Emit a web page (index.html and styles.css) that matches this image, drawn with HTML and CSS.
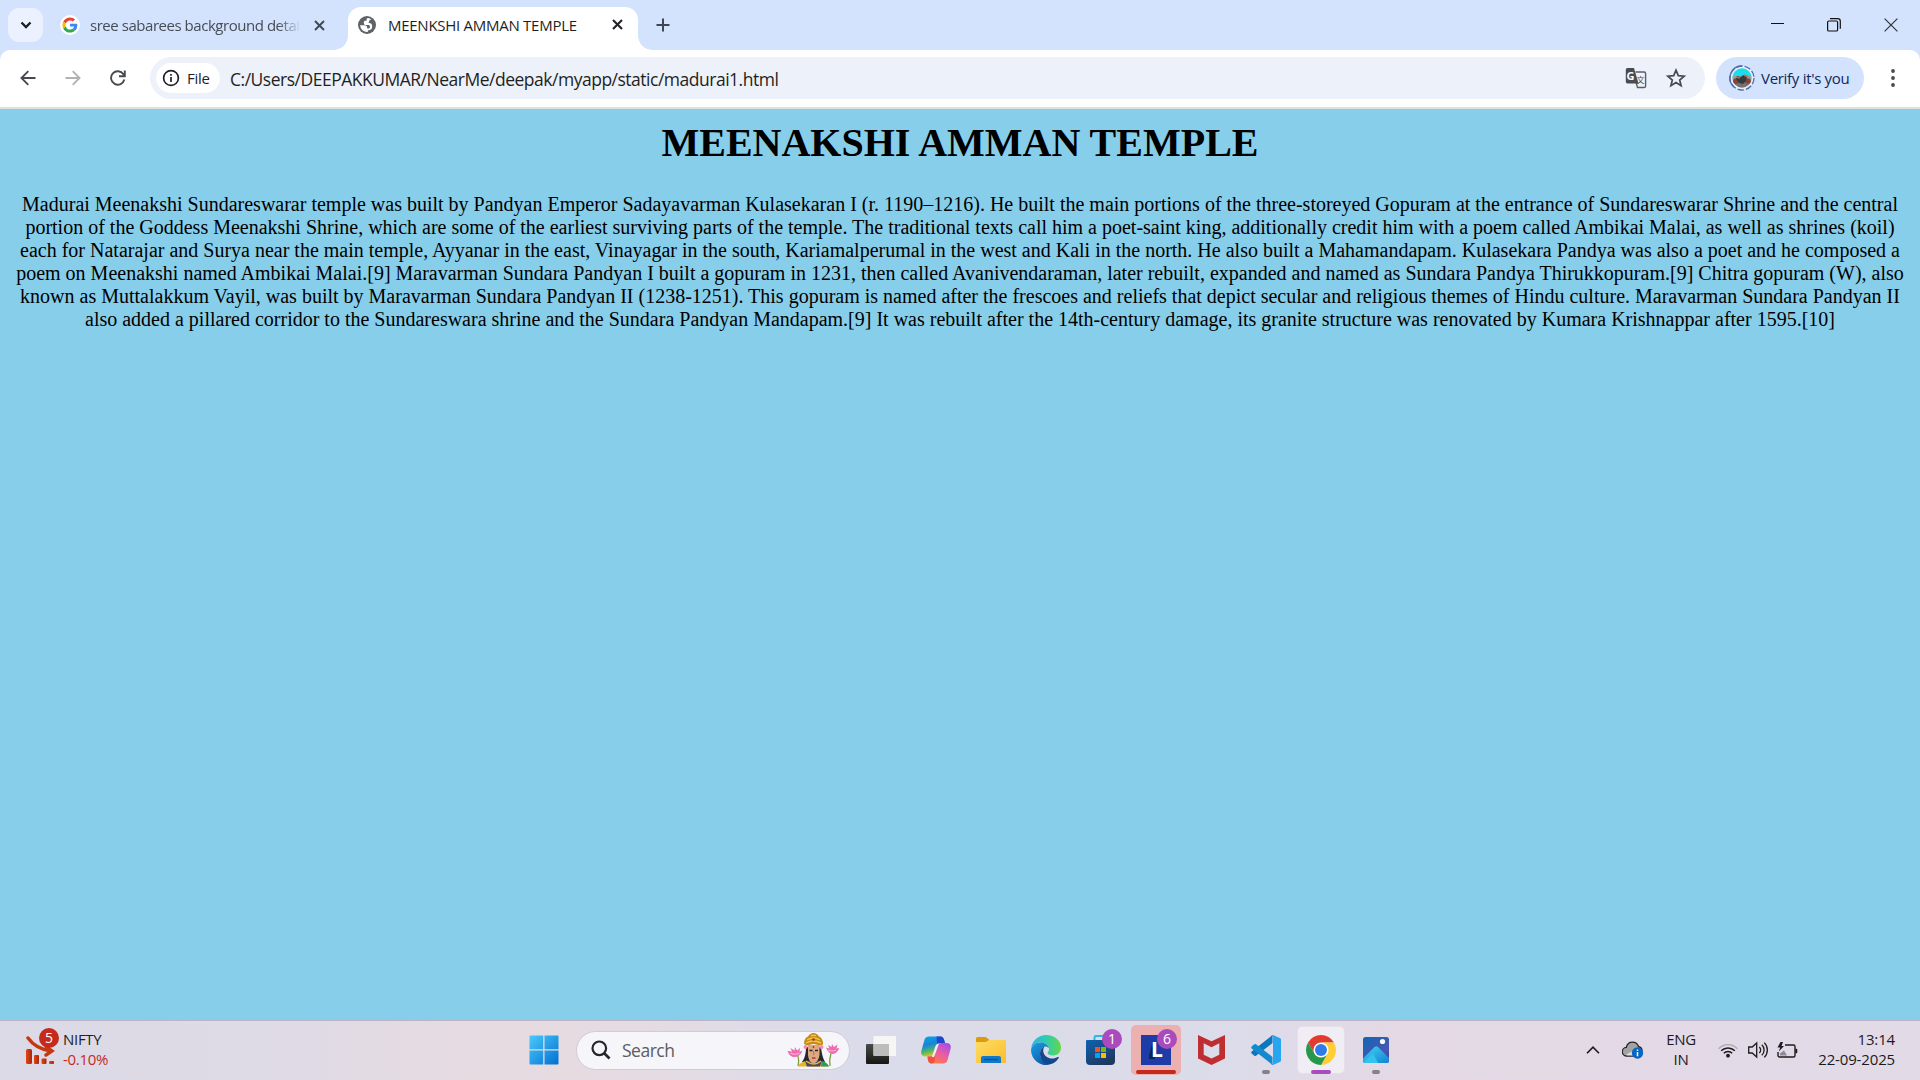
FILE: index.html
```html
<!DOCTYPE html>
<html lang="en">
<head>
<meta charset="utf-8">
<title>MEENKSHI AMMAN TEMPLE</title>
<link rel="stylesheet" href="styles.css">
</head>
<body>
<header class="tabstrip">
  <div class="tab-search"><svg width="12" height="8" viewBox="0 0 12 8"><path d="M1.5 1.5 6 6l4.500-4.500" fill="none" stroke="#1b1c1e" stroke-width="2.300"/></svg></div>
  <div class="tab tab-idle">
    <svg class="favicon" width="20" height="20" viewBox="0 0 20 20"><circle cx="10" cy="10" r="10" fill="#fff"/><g transform="translate(2.400 2.400) scale(.317)"><path fill="#EA4335" d="M24 9.500c3.540 0 6.710 1.220 9.210 3.600l6.850-6.850C35.900 2.380 30.470 0 24 0 14.620 0 6.510 5.380 2.560 13.220l7.980 6.190C12.430 13.720 17.740 9.500 24 9.500z"/><path fill="#4285F4" d="M46.980 24.550c0-1.570-.150-3.090-.380-4.550H24v9.020h12.940c-.580 2.960-2.260 5.480-4.780 7.180l7.730 6c4.510-4.180 7.090-10.360 7.090-17.650z"/><path fill="#FBBC05" d="M10.530 28.590c-.480-1.450-.760-2.990-.760-4.590s.270-3.140.760-4.590l-7.980-6.190C.920 16.460 0 20.120 0 24s.920 7.540 2.560 10.780l7.970-6.190z"/><path fill="#34A853" d="M24 48c6.480 0 11.930-2.130 15.890-5.810l-7.730-6c-2.150 1.450-4.920 2.300-8.160 2.300-6.260 0-11.570-4.220-13.470-9.910l-7.980 6.190C6.510 42.620 14.620 48 24 48z"/></g></svg>
    <span class="tab-title faded">sree sabarees background detai</span>
    <svg class="close" width="11" height="11" viewBox="0 0 11 11"><path d="M1 1l9 9M10 1l-9 9" stroke="#41474f" stroke-width="1.900"/></svg>
  </div>
  <div class="tab tab-active">
    <svg class="favicon" width="20" height="20" viewBox="0 0 24 24"><circle cx="12" cy="12" r="10.800" fill="#5f6368"/><path d="M3.700 12.300h5.500c2 0 3 1.200 3 3v1h1.600c1 0 1.800-.8 1.800-1.800V14c0-1.200-.8-2-2-2h-3.400c-1.200 0-2-.8-2-2V8.800c0-1 .8-1.800 1.800-1.800h1.500V5.500c0-1 .7-1.700 1.700-1.900 1.500.2 3 .8 4 1.700-1.700.3-2.200.8-2.700 1.700v1.200c0 .8-.5 1.300-1.300 1.300h1.300c2.200 0 3.700 1.500 3.700 3.700v1c0 2.400-1.600 4-4 4H13v2.200A8.400 8.400 0 0 1 3.700 12.300z" fill="#fff"/></svg>
    <span class="tab-title">MEENKSHI AMMAN TEMPLE</span>
    <svg class="close" width="11" height="11" viewBox="0 0 11 11"><path d="M1 1l9 9M10 1l-9 9" stroke="#202226" stroke-width="2.100"/></svg>
  </div>
  <svg class="new-tab" width="14" height="14" viewBox="0 0 14 14"><path d="M7 .5v13M.5 7h13" stroke="#41464e" stroke-width="2"/></svg>
  <div class="window-controls">
    <svg width="13" height="14" viewBox="0 0 13 14"><path d="M0 5.500h13" stroke="#111" stroke-width="1"/></svg>
    <svg width="14" height="14" viewBox="0 0 14 14"><g fill="none" stroke="#111" stroke-width="1.200"><rect x=".6" y="3" width="10" height="10" rx="1.300"/><path d="M3 .7h7.700a2.600 2.600 0 0 1 2.600 2.600v7.500"/></g></svg>
    <svg width="14" height="14" viewBox="0 0 14 14"><path d="M.6.600l12.800 12.800M13.400.6.600 13.400" stroke="#30343b" stroke-width="1.200"/></svg>
  </div>
</header>

<nav class="toolbar">
  <div class="nav-buttons">
    <svg width="16" height="16" viewBox="0 0 16 16"><path d="M15.500 8H2M8.300 1.200 1.500 8l6.800 6.800" fill="none" stroke="#474a4e" stroke-width="1.900"/></svg>
    <svg width="16" height="16" viewBox="0 0 16 16"><path d="M.5 8H14M7.700 1.200 14.500 8l-6.800 6.800" fill="none" stroke="#b0b2b5" stroke-width="1.900"/></svg>
    <svg width="16" height="16" viewBox="0 0 16 16"><path d="M14.300 9.500A6.700 6.700 0 1 1 13.400 4.300L14.500 6M14.800.5v5.800H9" fill="none" stroke="#474a4e" stroke-width="1.900"/></svg>
  </div>
  <div class="omnibox">
    <div class="chip">
      <svg width="18" height="18" viewBox="0 0 18 18"><circle cx="9" cy="9" r="7.400" fill="none" stroke="#202124" stroke-width="1.700"/><path d="M9 8v5M9 5v1.700" stroke="#202124" stroke-width="1.700"/></svg>
      <span>File</span>
    </div>
    <span class="url">C:/Users/DEEPAKKUMAR/NearMe/deepak/myapp/static/madurai1.html</span>
    <svg class="translate" width="22" height="22" viewBox="0 0 22 22"><path d="M10.500 5H19a1.600 1.600 0 0 1 1.600 1.600v12.300a1.600 1.600 0 0 1-1.600 1.600h-6.500L8 5" fill="#edf1fa" stroke="#5b5e63" stroke-width="1.400"/><path d="M2.500 1H9l4.500 15.500h-11A1.700 1.700 0 0 1 .8 14.800V2.700A1.700 1.700 0 0 1 2.500 1z" fill="#4a4c50"/><text x="1.600" y="13" class="tr-g">G</text><text x="11.600" y="16" class="tr-w">文</text></svg>
    <svg class="star" width="20" height="20" viewBox="0 0 20 20"><path d="M10 2.200l2.300 5.400 5.900.5-4.500 3.900 1.400 5.700L10 14.600l-5.100 3.100 1.400-5.700-4.500-3.900 5.900-.5z" fill="none" stroke="#474a4e" stroke-width="1.700"/></svg>
  </div>
  <div class="profile">
    <svg width="26" height="26" viewBox="0 0 26 26"><defs><clipPath id="av"><circle cx="13" cy="13" r="9.700"/></clipPath></defs><circle cx="13" cy="13" r="12" fill="#e6eefd"/><circle cx="13" cy="13" r="12" fill="none" stroke="#4f6ea8" stroke-width="1.300" stroke-dasharray="6.400 2"/><path d="M13 1A12 12 0 0 0 5 22" fill="none" stroke="#4f6ea8" stroke-width="1.300"/><g clip-path="url(#av)"><path fill="#19dced" d="M0 0h26v12H0z"/><path fill="#8da3a0" d="M0 11h26v5H0z"/><path fill="#77706b" d="M0 16h26v10H0z"/><circle cx="7" cy="16" r="2.800" fill="#8a4230"/><circle cx="19" cy="16" r="2.800" fill="#8a4230"/><path d="M8 11l4 1 2-2 4 2-1 4-3 3-4-1-3-4z" fill="#343b40"/><path d="M7 12l4 1M15 10l4 2" stroke="#c76941" stroke-width="1.700"/></g></svg>
    <span>Verify it's you</span>
  </div>
  <svg class="kebab" width="6" height="20" viewBox="0 0 6 20"><g fill="#474a4e"><circle cx="3" cy="3" r="1.900"/><circle cx="3" cy="10" r="1.900"/><circle cx="3" cy="17" r="1.900"/></g></svg>
</nav>

<main class="page">
  <h1>MEENAKSHI AMMAN TEMPLE</h1>
  <p>Madurai Meenakshi Sundareswarar temple was built by Pandyan Emperor Sadayavarman Kulasekaran I (r. 1190–1216). He built the main portions of the three-storeyed Gopuram at the entrance of Sundareswarar Shrine and the central<br>
  portion of the Goddess Meenakshi Shrine, which are some of the earliest surviving parts of the temple. The traditional texts call him a poet-saint king, additionally credit him with a poem called Ambikai Malai, as well as shrines (koil)<br>
  each for Natarajar and Surya near the main temple, Ayyanar in the east, Vinayagar in the south, Kariamalperumal in the west and Kali in the north. He also built a Mahamandapam. Kulasekara Pandya was also a poet and he composed a<br>
  poem on Meenakshi named Ambikai Malai.[9] Maravarman Sundara Pandyan I built a gopuram in 1231, then called Avanivendaraman, later rebuilt, expanded and named as Sundara Pandya Thirukkopuram.[9] Chitra gopuram (W), also<br>
  known as Muttalakkum Vayil, was built by Maravarman Sundara Pandyan II (1238-1251). This gopuram is named after the frescoes and reliefs that depict secular and religious themes of Hindu culture. Maravarman Sundara Pandyan II<br>
  also added a pillared corridor to the Sundareswara shrine and the Sundara Pandyan Mandapam.[9] It was rebuilt after the 14th-century damage, its granite structure was renovated by Kumara Krishnappar after 1595.[10]</p>
</main>

<footer class="taskbar">
  <div class="widget">
    <div class="widget-icon">
      <svg width="30" height="30" viewBox="0 0 30 30"><defs><linearGradient id="nf" x2="1" y2="0"><stop stop-color="#e2480f"/><stop offset="1" stop-color="#a92515"/></linearGradient></defs><g fill="url(#nf)"><rect x="0" y="14" width="6" height="15" rx="1.500"/><rect x="8" y="20" width="5" height="9" rx="1"/><rect x="15.500" y="23.500" width="5" height="5.500" rx="1"/><rect x="23" y="26" width="5" height="3" rx="1"/></g><path d="M2 3c5 7 12 11.500 23 13M20 11.500l6 4.500-6 4" fill="none" stroke="#c43912" stroke-width="3.400" stroke-linecap="round"/></svg>
      <span class="badge badge-red">5</span>
    </div>
    <div class="two-line"><span class="w-nifty">NIFTY</span><span class="w-change">-0.10%</span></div>
  </div>

  <div class="apps">
    <div class="slot start"><svg width="30" height="30" viewBox="0 0 30 30"><defs><linearGradient id="win" x2="1" y2="1"><stop stop-color="#4cc9fb"/><stop offset="1" stop-color="#0070d2"/></linearGradient></defs><path fill="url(#win)" d="M1.500.500h12.700v13.700H.500V1.500a1 1 0 0 1 1-1zM15.500.500h13a1 1 0 0 1 1 1v12.700h-14zM.500 15.500h13.700v14H1.500a1 1 0 0 1-1-1zM15.500 15.500h14v13a1 1 0 0 1-1 1h-13z"/></svg></div>
    <div class="search">
      <svg width="20" height="20" viewBox="0 0 20 20"><circle cx="8.300" cy="8.300" r="6.800" fill="none" stroke="#25262a" stroke-width="2.200"/><path d="M13 13l5.500 5.500" stroke="#25262a" stroke-width="2.600"/></svg>
      <span>Search</span>
      <svg class="highlight" width="52" height="34" viewBox="0 0 52 34">
        <path d="M10.500 22q2 5 .5 11M44 20q-2 7-1 13" fill="none" stroke="#7c9c3c" stroke-width="1.300"/>
        <path d="M.500 18l4.500.500-1.500-3.500 4 2.500L8 14l2 3.500 3-2.500-.500 3.500 3-.500q-3 6-8 6T.500 18zM39 14.500l3.500 1L41 12l3.500 2 .5-3 2 3 3.500-2.500-1 4 3-.500q-3 6-7 6T39 14.500z" fill="#f06ab0"/>
        <path d="M3.500 20q4 2.500 9 0M41 17q4 2 8 0" stroke="#fbb3d5" stroke-width="1.200" fill="none"/>
        <path d="M19 14q0 10-4 15h23q-3-5-4-15z" fill="#26282e"/>
        <path d="M11 33.500q2-5 9-5.500h12q7 1 10 5.500z" fill="#e3b528"/><path d="M35 28q5 1 7 5.500h-8z" fill="#319b5c"/><path d="M18 28l2 5.500h13l2-5.500z" fill="#4f475d"/>
        <path d="M21 12h11.500v10q-1 7-6 8.500Q21.500 29 21 22z" fill="#dca983"/>
        <path d="M17 11q0-6 4-7.500Q23 0 26.500 0T32 3.500q4 1.500 4 8l-3.500 1q-6-3-12 0z" fill="#c78a17"/>
        <path d="M20 7q6.500-4 13 0M19 10q7-4 15 0M24 2.500h5" stroke="#f2c646" stroke-width="1.400" fill="none"/>
        <circle cx="26.500" cy="6.500" r="1.300" fill="#a5322c"/><circle cx="18.500" cy="14" r="2" fill="#f08bb8"/><circle cx="34.500" cy="14" r="2" fill="#f08bb8"/>
        <path d="M22.500 17.500h3M28 17.500h3" stroke="#332626" stroke-width="1.300"/><path d="M26.700 18v4" stroke="#b57550"/><path d="M25 25h3.500" stroke="#b42d33" stroke-width="1.400"/><circle cx="26.500" cy="14" r=".9" fill="#c3272b"/>
        <path d="M19 28q8 6 15 0" stroke="#e6bc39" stroke-width="1.500" fill="none"/>
      </svg>
    </div>
    <div class="slot"><svg width="30" height="30" viewBox="0 0 30 30"><defs><linearGradient id="tv" x2="0" y2="1"><stop stop-color="#4a4a48"/><stop offset="1" stop-color="#161616"/></linearGradient></defs><rect y="9" width="23" height="20" rx="1" fill="url(#tv)"/><rect x="7.500" y="1" width="22.500" height="20" rx="1" fill="#f6f6f7"/><path d="M7.500 9H23v12H8.500a1 1 0 0 1-1-1z" fill="#bdbdbc"/></svg></div>
    <div class="slot"><svg width="30" height="28" viewBox="0 0 30 28"><defs><linearGradient id="c1" x2=".3" y2="1"><stop stop-color="#0aa7ea"/><stop offset=".45" stop-color="#1684d8"/><stop offset=".75" stop-color="#4bb56a"/><stop offset="1" stop-color="#dfc81c"/></linearGradient><linearGradient id="c2" x1=".8" x2=".2" y2="1"><stop stop-color="#a84be8"/><stop offset=".5" stop-color="#ee5f9e"/><stop offset="1" stop-color="#ff7d3a"/></linearGradient></defs><path d="M8 .5h11.500c2 0 3 1.500 3.500 3L24 7h-4.500c-2 0-3 1-3.600 3l-2.500 7.500c-.6 2-1.700 3-3.700 3H4.500C1 20.500-.5 18 .4 14.700l3.100-11C4.200 1.500 5.800.5 8 .5z" fill="url(#c1)"/><path d="M15.500.5h4c2 0 3 1.500 3.500 3L24 7h-4.500c-1.500 0-2.700.7-3.300 2z" fill="#2345cf"/><path d="M22 27.500H10.500c-2 0-3-1.500-3.500-3L6 20.500h4.500c2 0 3-1 3.600-3L16.600 10c.6-2 1.700-3 3.700-3h5.200c3.500 0 5 2.500 4.100 5.800l-3.100 11.500c-.7 2.200-2.300 3.200-4.500 3.200z" fill="url(#c2)"/><path d="M7 20.500h3.500c2 0 3-1 3.600-3l-.4 7c-.3 2-1.200 3-3.200 3-2 0-3-1.500-3.500-3z" fill="#ef5340"/><path d="M18 7.500l-5 13.500q-1 .5-2-.5l3-9q1-4 4-4z" fill="#f6e9ff"/></svg></div>
    <div class="slot"><svg width="30" height="28" viewBox="0 0 30 28"><defs><linearGradient id="fo" x2="1" y2="1"><stop stop-color="#ffdc67"/><stop offset="1" stop-color="#fbbd28"/></linearGradient></defs><path d="M0 2.500A1.500 1.500 0 0 1 1.500 1h8.200l3.300 2.500V8H0z" fill="#dd9a0a"/><path d="M0 6h10l3-2h16a1 1 0 0 1 1 1v21a1 1 0 0 1-1 1H1a1 1 0 0 1-1-1z" fill="url(#fo)"/><path d="M5 27v-5a2 2 0 0 1 2-2h16a2 2 0 0 1 2 2v5z" fill="#1179cb"/><path d="M8 23.500h14" stroke="#07549b" stroke-width="1.500"/></svg></div>
    <div class="slot"><svg width="30" height="30" viewBox="0 0 30 30"><defs><linearGradient id="e1" x2="1"><stop stop-color="#28b5e8"/><stop offset=".55" stop-color="#32cda6"/><stop offset="1" stop-color="#65d848"/></linearGradient><linearGradient id="e2" x2=".6" y2="1"><stop stop-color="#1aa0df"/><stop offset="1" stop-color="#0c5cad"/></linearGradient></defs><path d="M.2 13.500C1 5.500 7.500 0 15 0c8.500 0 15 5.500 15 12.500 0 5-3.500 8-8 8-3.800 0-5.500-1.400-5.500-2.400 0-.8 1.500-1.300 1.500-3.900C18 11 14.500 7.500 9.500 7.500 5 7.500 1.700 10 .2 13.500z" fill="url(#e1)"/><path d="M0 15C.5 10.500 4.500 7.500 9.500 7.500c4.500 0 7.500 2.500 8.300 5.500-1.300-1.300-2.800-1.800-4-1.500C11 12.300 9 15 9 18.500c0 5.500 4 10.500 9.500 11.100A15 15 0 0 1 0 15z" fill="url(#e2)"/><path d="M9 18.500c0-3.500 2-6.200 4.800-7C12 13 12 16 12.500 17.500c1 3.500 4.500 6 8.500 6 2.500 0 4.500-.700 5.800-1.500.8-.4 1.300.3.900 1A14.500 14.500 0 0 1 17 29.800C12 28.500 9 24 9 18.500z" fill="#12488d"/></svg></div>
    <div class="slot"><svg width="30" height="30" viewBox="0 0 30 30"><defs><linearGradient id="st" x2=".6" y2="1"><stop stop-color="#0c63b1"/><stop offset="1" stop-color="#203861"/></linearGradient></defs><path d="M8.500 8V2.500A1.500 1.500 0 0 1 10 1h10a1.500 1.500 0 0 1 1.500 1.500V8" fill="none" stroke="#28b8ed" stroke-width="2"/><path d="M0 6a1 1 0 0 1 1-1h27a1 1 0 0 1 1 1v20a4 4 0 0 1-4 4H4a4 4 0 0 1-4-4z" fill="url(#st)"/><path fill="#f25022" d="M9 12h5v5H9z"/><path fill="#7fba00" d="M15 12h5v5h-5z"/><path fill="#00a4ef" d="M9 18h5v5H9z"/><path fill="#ffb900" d="M15 18h5v5h-5z"/></svg><span class="badge badge-purple">1</span></div>
    <div class="slot attention"><svg width="30" height="30" viewBox="0 0 30 30"><path fill="#1d3ca8" d="M0 0h30v30H0z"/><path d="M11 9L8 21v3l6 0z" fill="#0b2453"/><text x="10" y="22" class="logo-l">L</text></svg><span class="badge badge-purple">6</span><i class="run run-red"></i></div>
    <div class="slot"><svg width="27" height="30" viewBox="0 0 27 30"><path d="M0 0l13.500 6.300L27 0v23.500L13.500 30 0 23.500zm5.700 8.300v11.400l7.800 3.900 7.800-3.900V8.300l-7.800 3.900z" fill="#bf2f32"/></svg></div>
    <div class="slot"><svg width="30" height="30" viewBox="0 0 30 30"><path d="M21.500 0v8L5 20.800a1.500 1.500 0 0 1-1.700 0L.7 18.500a1.300 1.300 0 0 1 0-1.900z" fill="#0877bc"/><path d="M21.500 30v-8L5 9.200a1.500 1.500 0 0 0-1.700 0L.7 11.500a1.300 1.300 0 0 0 0 1.900z" fill="#138ad0"/><path d="M22 0l6.800 3A2 2 0 0 1 30 5v20a2 2 0 0 1-1.200 2L22 30a2 2 0 0 1-2-1c1 .7 2 0 2-1.200V2.200C22 1 21 .3 20 1a2 2 0 0 1 2-1z" fill="#27a5ee"/></svg><i class="run run-dot"></i></div>
    <div class="slot current"><svg width="30" height="30" viewBox="0 0 48 48"><circle cx="24" cy="24" r="12" fill="#fff"/><path fill="#e33b2e" d="M3.220 12A24 24 0 0 1 44.780 12H24A12 12 0 0 0 13.610 30z"/><path fill="#ffcd35" d="M44.780 12A24 24 0 0 1 24 48L34.400 30A12 12 0 0 0 24 12z"/><path fill="#27984a" d="M24 48A24 24 0 0 1 3.220 12L13.610 30A12 12 0 0 0 34.400 30z"/><circle cx="24" cy="24" r="9.600" fill="#2f7bea"/></svg><i class="run run-purple"></i></div>
    <div class="slot"><svg width="26" height="26" viewBox="0 0 26 26"><defs><linearGradient id="ph" x2="1" y2="1"><stop stop-color="#1265b4"/><stop offset=".7" stop-color="#4858b2"/><stop offset="1" stop-color="#4a3aa0"/></linearGradient><linearGradient id="pm" x2=".8" y2="1"><stop stop-color="#42d4f2"/><stop offset="1" stop-color="#168ad6"/></linearGradient><clipPath id="pc"><rect width="26" height="26" rx="2.500"/></clipPath></defs><g clip-path="url(#pc)"><path fill="url(#ph)" d="M0 0h26v26H0z"/><path d="M0 21.500L11.500 10a2.500 2.500 0 0 1 3.500 0l11 11v5H0z" fill="url(#pm)"/><path d="M0 26L10 16l5 10z" fill="#31c3ee"/></g><circle cx="19.500" cy="4.500" r="2.600" fill="#f5fbff"/></svg><i class="run run-dot"></i></div>
  </div>

  <div class="tray">
    <svg class="chev" width="14" height="8" viewBox="0 0 14 8"><path d="M1 7.200L7 1.200l6 6" fill="none" stroke="#1c1c1f" stroke-width="1.600"/></svg>
    <svg class="cloud" width="22" height="20" viewBox="0 0 22 20"><path d="M5 16A4.300 4.300 0 0 1 4.300 7.400C5 4 7.700 2.200 10.500 2.200c3 0 5.200 1.800 6 4.300 2 .5 3.500 2 3.500 4L14 16z" fill="#a3a3a3" stroke="#252525" stroke-width="1.300"/><path d="M4 14.800L16 8l3 3-6 4.400H5z" fill="#ddd"/><circle cx="15.500" cy="13" r="5.700" fill="#0567c4"/><path d="M15.500 12v4.200M15.500 9.500v1.600" stroke="#fff" stroke-width="1.500"/></svg>
    <div class="two-line lang"><span>ENG</span><span>IN</span></div>
    <svg class="wifi" width="20" height="16" viewBox="0 0 20 16"><path d="M.6 6.700a13 13 0 0 1 18.800 0" fill="none" stroke="#aba7b0" stroke-width="1.300"/><path d="M3.200 8.700a9.600 9.600 0 0 1 13.600 0M5.800 11.300a6 6 0 0 1 8.400 0" fill="none" stroke="#1c1c1f" stroke-width="1.500"/><circle cx="10" cy="13.700" r="1.900" fill="#1c1c1f"/></svg>
    <svg class="vol" width="20" height="18" viewBox="0 0 20 18"><path d="M.7 6h3.500L8.700 2v14l-4.500-4H.7zM11.300 6a4 4 0 0 1 0 6M13.800 3.800a7 7 0 0 1 0 10.400M16.300 1.600a10.500 10.500 0 0 1 0 14.800" fill="none" stroke="#1c1c1f" stroke-width="1.300"/></svg>
    <svg class="bat" width="21" height="17" viewBox="0 0 21 17"><path d="M8 3h8.500A1.500 1.500 0 0 1 18 4.500v9a1.500 1.500 0 0 1-1.500 1.500h-14A1.500 1.500 0 0 1 1 13.500V10" fill="none" stroke="#1c1c1f" stroke-width="1.400"/><path d="M18.300 6.700h1a1 1 0 0 1 1 1v2.600a1 1 0 0 1-1 1h-1z" fill="#1c1c1f"/><path d="M3.500 0L.5 5.500h2.700L1.800 9.500 7 4H4.500L6 0z" fill="#1c1c1f"/><path d="M3 13.500h7L7 8.500l-4 3z" fill="#8d8a90"/></svg>
    <div class="two-line clock"><span>13:14</span><span>22-09-2025</span></div>
  </div>
</footer>
</body>
</html>
```
FILE: styles.css
```css
* { box-sizing: border-box; }
body {
  margin: 0;
  width: 1920px;
  height: 1080px;
  overflow: hidden;
  display: flex;
  flex-direction: column;
  font-family: "Open Sans", "Noto Sans", sans-serif;
  font-size: 15px;
  color: #1f1f1f;
  background: #d3e2fd;
}
svg { display: block; flex: none; }
span { white-space: nowrap; }

.tabstrip { display: flex; align-items: center; height: 50px; padding-left: 8px; flex: none; }
.tab-search {
  width: 35px; height: 34px; border-radius: 11px; background: #ebf1fe;
  display: flex; align-items: center; justify-content: center;
}
.tab { display: flex; align-items: center; }
.tab-idle { width: 305px; padding-left: 17px; color: #474c55; }
.tab-title { margin-left: 10px; letter-spacing: -0.27px; }
.faded {
  width: 212px; letter-spacing: -0.46px;
  -webkit-mask-image: linear-gradient(90deg, #000 188px, transparent 211px);
  mask-image: linear-gradient(90deg, #000 188px, transparent 211px);
}
.tab-idle .close { margin-left: 12px; }
.tab-active {
  position: relative; width: 290px; height: 43px; align-self: flex-end;
  padding: 0 15px 8px 15px; background: #fff; border-radius: 13px 13px 0 0;
}
.tab-active::before, .tab-active::after {
  content: ""; position: absolute; bottom: 0; width: 14px; height: 14px;
}
.tab-active::before { left: -14px; background: radial-gradient(circle at 0 0, transparent 13.5px, #fff 14px); }
.tab-active::after { right: -14px; background: radial-gradient(circle at 100% 0, transparent 13.5px, #fff 14px); }
.tab-active .favicon { margin-left: -6px; }
.tab-active .favicon { margin-left: 0; margin-right: 0; }
.tab-active { padding-left: 9px; }
.tab-active .tab-title { margin-left: 11px; }
.tab-active .close { margin-left: auto; }
.new-tab { margin-left: 18px; }
.window-controls { margin-left: auto; display: flex; gap: 43px; padding-right: 22px; }

.toolbar {
  display: flex; align-items: center; height: 59px; flex: none;
  padding: 0 24px 2px 20px; background: #fff;
  border-bottom: 2px solid #dfe1e0; border-radius: 10px 10px 0 0;
}
.nav-buttons { display: flex; gap: 29px; width: 130px; }
.omnibox {
  display: flex; align-items: center; width: 1555px; height: 42px;
  padding: 0 19px 0 6px; border-radius: 21px; background: #edf1fa;
}
.chip {
  display: flex; align-items: center; gap: 7px; width: 64px; height: 30px;
  padding-left: 6px; border-radius: 15px; background: #fff;
}
.chip span { font-weight: 500; letter-spacing: -0.3px; }
.url { margin-left: 10px; padding-top: 2px; font-size: 17.5px; letter-spacing: -0.49px; }
.translate { margin-left: auto; }
.tr-g { font: bold 11px "Open Sans", sans-serif; fill: #fff; }
.tr-w { font: 8px "Noto Sans CJK SC", sans-serif; fill: #4a4c50; }
.star { margin-left: 19px; }
.profile {
  display: flex; align-items: center; gap: 6px; width: 148px; height: 42px;
  margin-left: 11px; padding-left: 13px; border-radius: 21px;
  background: #d3e2fd; color: #0a2a5e;
}
.profile span { letter-spacing: -0.3px; }
.kebab { margin-left: auto; }

.page {
  flex: 1; background: #87ceeb; color: #000; text-align: center;
  font-family: "Liberation Serif", "Times New Roman", serif; font-size: 20px; line-height: 23px;
}
.page h1 { margin: 0; padding-top: 11px; font-size: 40px; line-height: 46px; }
.page p { margin: 27px 0 0; white-space: nowrap; }

.taskbar {
  display: flex; align-items: center; height: 60px; flex: none;
  padding-bottom: 1px;
  border-top: 1px solid #b9b5c4;
  background: linear-gradient(90deg, #dcdae7 0, #dedae6 260px, #e6dbe1 480px, #e5dbe2 640px, #dadceb 860px, #dcdbe8 1000px, #dbdcea 1200px, #e4d9e5 1400px, #e2dae7 1920px);
}
.widget { display: flex; align-items: center; width: 519px; padding-left: 26px; }
.widget-icon { position: relative; width: 37px; }
.two-line { display: flex; flex-direction: column; padding-bottom: 2px; line-height: 20px; letter-spacing: -0.3px; }
.w-change { color: #c42b1c; }
.badge {
  position: absolute; width: 20px; height: 20px; border-radius: 50%;
  color: #fff; font-size: 14px; line-height: 20px; text-align: center;
}
.badge-red { left: 13px; top: -7px; background: #c42b1c; }
.badge-purple { left: 26px; top: 4px; background: #a94bbd; }
.apps { display: flex; align-items: center; gap: 5px; }
.slot {
  position: relative; width: 50px; height: 50px; border-radius: 5px;
  display: flex; align-items: center; justify-content: center;
}
.search {
  display: flex; align-items: center; width: 274px; height: 39px; margin: 0 1px 0 2px;
  padding-left: 14px; border-radius: 20px; background: #f6f5f9;
  border: 1px solid #d0cbd5; font-size: 17.5px; color: #5c5c60;
}
.search span { margin-left: 11px; letter-spacing: -0.5px; }
.highlight { margin-left: auto; margin-right: 10px; }
.attention { background: #ebb0af; }
.current { background: #f0eef4; border: 1px solid #e5dfe9; width: 48px; height: 48px; margin: 0 1px; }
.run { position: absolute; bottom: 1px; left: 50%; height: 4px; border-radius: 2px; transform: translateX(-50%); }
.run-red { width: 40px; background: #c42b1c; }
.run-purple { width: 20px; background: #a94bbd; bottom: -1px; }
.run-dot { width: 8px; background: #858287; }
.logo-l { font: bold 21px "Open Sans", sans-serif; fill: #fff; }

.tray { display: flex; align-items: center; margin-left: auto; padding-right: 25px; color: #1b1b1e; }
.cloud { margin-left: 22px; }
.lang { width: 34px; margin-left: 20px; align-items: center; }
.wifi { margin-left: 20px; }
.vol { margin-left: 10px; }
.bat { margin-left: 9px; }
.clock { width: 97px; align-items: flex-end; letter-spacing: -0.15px; }
```
